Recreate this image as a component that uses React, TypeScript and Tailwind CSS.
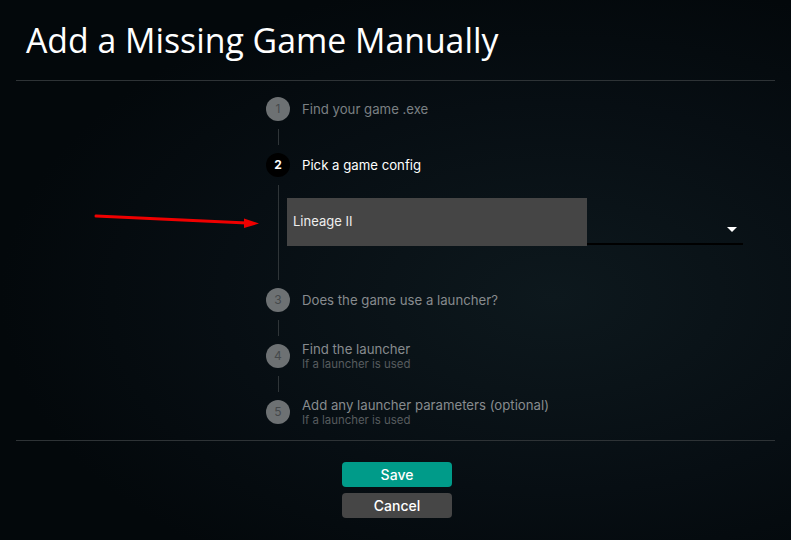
import React from "react";

interface Step {
  n: number;
  title: string;
  sub?: string;
  state: "done" | "active" | "todo";
}

const steps: Step[] = [
  { n: 1, title: "Find your game .exe", state: "done" },
  { n: 2, title: "Pick a game config", state: "active" },
  { n: 3, title: "Does the game use a launcher?", state: "todo" },
  { n: 4, title: "Find the launcher", sub: "If a launcher is used", state: "todo" },
  {
    n: 5,
    title: "Add any launcher parameters (optional)",
    sub: "If a launcher is used",
    state: "todo",
  },
];

function StepRow({ step }: { step: Step }) {
  const active = step.state === "active";
  return (
    <div className="flex items-center h-6">
      <div
        className={
          active
            ? "w-6 h-6 rounded-full bg-black text-white text-[12px] font-bold flex items-center justify-center shrink-0"
            : "w-6 h-6 rounded-full bg-[#6d7173] text-[#45494b] text-[12px] flex items-center justify-center shrink-0"
        }
      >
        {step.n}
      </div>
      <div className="ml-3 flex flex-col">
        <span
          className={
            active
              ? "text-[13.2px] leading-4 text-white"
              : step.state === "done"
              ? "text-[13.2px] leading-4 text-[#7b8083]"
              : "text-[13.2px] leading-4 text-[#878b8e]"
          }
        >
          {step.title}
        </span>
        {step.sub && (
          <span className="text-[11.4px] leading-[14px] text-[#575c5f]">
            {step.sub}
          </span>
        )}
      </div>
    </div>
  );
}

function Connector({ children, height }: { children?: React.ReactNode; height: string }) {
  return (
    <div className={`flex ${height}`}>
      <div className="w-6 flex justify-center py-2 shrink-0">
        <div className="w-px h-full bg-[#2f3538]" />
      </div>
      {children}
    </div>
  );
}

function ConfigSelect() {
  return (
    <div className="ml-[-3px] mt-[21px] flex w-[456px] h-12">
      <div className="w-[300px] h-12 bg-[#454545] flex items-center pl-[6px] text-[13px] text-[#eeeeee]">
        Lineage II
      </div>
      <div className="flex-1 relative border-b-2 border-black mb-[1px]">
        <div className="absolute right-[6px] top-[29px] w-0 h-0 border-l-[5px] border-r-[5px] border-t-[5px] border-l-transparent border-r-transparent border-t-white" />
      </div>
    </div>
  );
}

export default function App() {
  return (
    <div
      className="relative w-full h-[540px] flex flex-col bg-[radial-gradient(ellipse_70%_60%_at_70%_55%,#0d181d_0%,#070e13_60%,#03080b_100%)]"
      style={{ fontFamily: "Inter, 'Noto Sans', sans-serif" }}
    >
      <div className="h-[80px] pl-[26px] pt-[19px]">
        <h1
          className="text-[33.8px] leading-[42px] text-white font-normal"
          style={{ fontFamily: "'Open Sans', 'Noto Sans', sans-serif" }}
        >
          Add a Missing Game Manually
        </h1>
      </div>
      <div className="mx-4 h-px bg-[#2e3336]" />

      <div className="h-[359px] pl-[266px] pt-[16px] flex flex-col">
        <StepRow step={steps[0]} />
        <Connector height="h-8" />
        <StepRow step={steps[1]} />
        <Connector height="h-[111px]">
          <ConfigSelect />
        </Connector>
        <StepRow step={steps[2]} />
        <Connector height="h-8" />
        <StepRow step={steps[3]} />
        <Connector height="h-8" />
        <StepRow step={steps[4]} />
      </div>

      <div className="mx-4 h-px bg-[#2e3336]" />

      <div className="flex flex-col items-center pt-[21px] gap-[6px] pl-[3px]">
        <button className="w-[110px] h-[25px] rounded-[4px] bg-[#009b89] text-white text-[14px] font-medium">
          Save
        </button>
        <button className="w-[110px] h-[25px] rounded-[4px] bg-[#464646] text-white text-[14px] font-medium">
          Cancel
        </button>
      </div>

      <svg
        className="absolute left-0 top-0 pointer-events-none"
        width="791"
        height="540"
        viewBox="0 0 791 540"
      >
        <line x1="96" y1="216" x2="247" y2="223" stroke="#f00000" strokeWidth="3" strokeLinecap="round" />
        <polygon points="244,218.5 259,223.5 244,228" fill="#f00000" />
      </svg>
    </div>
  );
}
